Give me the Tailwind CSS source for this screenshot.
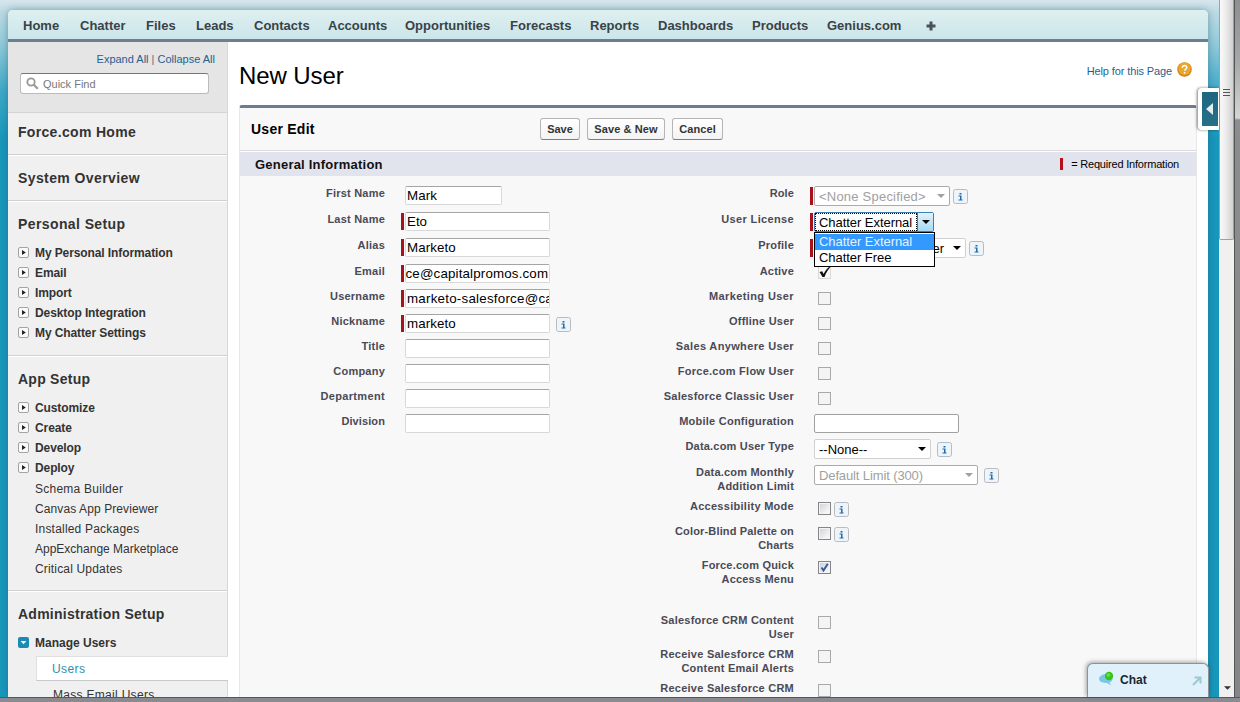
<!DOCTYPE html>
<html lang="en">
<head>
<meta charset="utf-8">
<title>New User</title>
<script src="https://cdn.jsdelivr.net/npm/@tailwindcss/browser@4"></script>
</head>
<body class="w-[1240px] h-[702px] overflow-hidden font-['Liberation_Sans',Arial,sans-serif] text-black">
<svg class="hidden">
  <symbol id="tri" viewBox="0 0 8 4"><path d="M0 0h8L4 4z" fill="currentColor"/></symbol>
  <symbol id="exp" viewBox="0 0 11 11"><rect x=".5" y=".5" width="10" height="10" rx="1.5" fill="#fafafa" stroke="#a3a3a3"/><path d="M4 3v5l3.800-2.500z" fill="#222"/></symbol>
  <symbol id="info" viewBox="0 0 15 15"><rect x=".5" y=".5" width="14" height="14" rx="2" fill="#edf5fb" stroke="#b8bbc0"/><path d="M6.500 4h2v1.500h-2zM5.500 6.500h3v4h1v1h-4v-1H7v-3H5.500z" fill="#2468a8"/></symbol>
</svg>
<div class="relative flex flex-col w-[1240px] h-[702px]">
 <div class="flex h-[697px] overflow-hidden">
  <div class="w-[1219px] h-[697px] pl-2 pt-2.5 overflow-hidden bg-[linear-gradient(180deg,#d6e6ec_0px,#bcdae4_12px,#8fc9da_45px,#3fa9c7_90px,#1797bc_140px,#1797bc_100%)]">
   <div class="w-[1200px] h-[687px] rounded-t-[5px] shadow-[0_0_7px_rgba(30,80,100,0.45)] bg-white overflow-hidden">
    <nav class="flex items-center gap-5 h-[32px] pl-[15px] pt-[2px] border-b-[3px] border-[#6f7e8f] bg-[linear-gradient(180deg,#dfeff0,#cbe6ea)] text-[13px] font-bold text-[#3a4247] whitespace-nowrap">
     <span class="w-[37px]">Home</span><span class="w-[46px]">Chatter</span><span class="w-[30px]">Files</span><span class="w-[38px]">Leads</span><span class="w-[54px]">Contacts</span><span class="w-[57px]">Accounts</span><span class="w-[85px]">Opportunities</span><span class="w-[60px]">Forecasts</span><span class="w-[48px]">Reports</span><span class="w-[74px]">Dashboards</span><span class="w-[55px]">Products</span><span class="w-[75px]">Genius.com</span>
     <svg class="w-[10px] h-[10px] ml-[4px]" viewBox="0 0 10 10"><path d="M3.500.5h3v3h3v3h-3v3h-3v-3h-3v-3h3z" fill="#4a5257"/></svg>
    </nav>
    <div class="flex h-[655px]">
     <aside class="w-[220px] shrink-0 bg-[#f0f0f0] border-r border-[#d8d8d8] text-[#333]">
      <div class="h-[71px] bg-[#e5e5e5] border-b border-[#d4d4d4] pt-[10px] pl-3">
       <div class="text-[11px] leading-[14px] text-[#1f5f92] text-right pr-[12px]">Expand All <span class="text-[#667]">|</span> Collapse All</div>
       <div class="flex items-center mt-[7px] w-[189px] h-[21px] rounded-[3px] border border-[#bbb] border-t-[#777] bg-white pl-[5px] gap-[4px] text-[11px] text-[#777]">
        <svg class="w-[13px] h-[13px]" viewBox="0 0 13 13" fill="none" stroke="#999" stroke-width="1.8"><circle cx="5" cy="5" r="3.7"/><path d="M7.8 7.800l4 4" stroke-width="2.2"/></svg><span class="pt-[2px]">Quick Find</span></div>
      </div>
      <section class="h-[42px] border-b border-[#d0d0d0] pt-[9px] pl-[10px]"><h2 class="text-[14px] leading-5 font-bold tracking-[0.32px]">Force.com Home</h2></section>
      <section class="h-[46px] border-t border-t-white border-b border-b-[#d0d0d0] pt-[12px] pl-[10px]"><h2 class="text-[14px] leading-5 font-bold tracking-[0.4px]">System Overview</h2></section>
      <section class="h-[155px] border-t border-t-white border-b border-b-[#d0d0d0] pt-[12px] pl-[10px]"><h2 class="text-[14px] leading-5 font-bold tracking-[0.4px]">Personal Setup</h2>
       <ul class="mt-[9px] text-[12px] leading-5 font-bold tracking-[-0.1px]">
        <li class="flex items-center gap-[6px]"><svg class="w-[11px] h-[11px] mb-px"><use href="#exp"/></svg>My Personal Information</li>
        <li class="flex items-center gap-[6px]"><svg class="w-[11px] h-[11px] mb-px"><use href="#exp"/></svg>Email</li>
        <li class="flex items-center gap-[6px]"><svg class="w-[11px] h-[11px] mb-px"><use href="#exp"/></svg>Import</li>
        <li class="flex items-center gap-[6px]"><svg class="w-[11px] h-[11px] mb-px"><use href="#exp"/></svg>Desktop Integration</li>
        <li class="flex items-center gap-[6px]"><svg class="w-[11px] h-[11px] mb-px"><use href="#exp"/></svg>My Chatter Settings</li>
       </ul></section>
      <section class="h-[235px] border-t border-t-white border-b border-b-[#d0d0d0] pt-[12px] pl-[10px]"><h2 class="text-[14px] leading-5 font-bold tracking-[0.25px]">App Setup</h2>
       <ul class="mt-[9px] text-[12px] leading-5 font-bold tracking-[-0.1px]">
        <li class="flex items-center gap-[6px]"><svg class="w-[11px] h-[11px] mb-px"><use href="#exp"/></svg>Customize</li>
        <li class="flex items-center gap-[6px]"><svg class="w-[11px] h-[11px] mb-px"><use href="#exp"/></svg>Create</li>
        <li class="flex items-center gap-[6px]"><svg class="w-[11px] h-[11px] mb-px"><use href="#exp"/></svg>Develop</li>
        <li class="flex items-center gap-[6px]"><svg class="w-[11px] h-[11px] mb-px"><use href="#exp"/></svg>Deploy</li>
       </ul>
       <ul class="mt-px pl-[17px] text-[12px] leading-5">
        <li class="tracking-[0.25px]">Schema Builder</li><li class="tracking-[0.1px]">Canvas App Previewer</li><li class="tracking-[0.2px]">Installed Packages</li><li>AppExchange Marketplace</li><li class="tracking-[0.17px]">Critical Updates</li>
       </ul></section>
      <section class="border-t border-t-white pt-[12px] pl-[10px]"><h2 class="text-[14px] leading-5 font-bold tracking-[0.25px]">Administration Setup</h2>
       <div class="mt-[9px] flex items-center gap-[6px] text-[12px] leading-5 font-bold"><svg class="w-[11px] h-[11px] mb-px" viewBox="0 0 11 11"><rect width="11" height="11" rx="2" fill="#1a8cb4"/><path d="M2.700 4h5.600L5.500 7.300z" fill="#fff"/></svg>Manage Users</div>
       <div class="mt-[3px] ml-[18px] mr-[-1px] h-[25px] bg-white border border-r-0 border-[#e0e0e0] border-b-[#c8c8c8] pl-[15px] text-[12px] leading-[25px] text-[#2a8fb5] tracking-[0.4px]">Users</div>
       <div class="pl-[35px] text-[12px] leading-5 mt-[4px] whitespace-nowrap tracking-[0.3px]">Mass Email Users</div>
      </section>
     </aside>
     <main class="flex-1 pl-[11px] pr-[11px]">
      <div class="flex justify-between h-[63px]">
       <h1 class="text-[24px] leading-[28px] pt-[20px] tracking-[-0.1px]">New User</h1>
       <div class="flex items-center h-[24px] mt-[16px] mr-[5px] gap-[5px] text-[11px] text-[#1f5f92]"><span class="pt-[2px] tracking-[-0.12px]">Help for this Page</span>
        <svg class="w-[15px] h-[15px] mb-px" viewBox="0 0 15 15"><circle cx="7.500" cy="7.500" r="7.300" fill="#d18a1a"/><circle cx="7.500" cy="6.800" r="6.200" fill="#eba62c"/><path d="M5.300 5.700c.1-3 4.600-2.600 4.400 0-.1 1.500-2.100 1.600-2.100 3.100" fill="none" stroke="#fff" stroke-width="1.500"/><path d="M6.800 10h1.600v1.600H6.800z" fill="#fff"/></svg></div>
      </div>
      <div class="h-[600px] w-[958px] rounded-t-[3px] border-t-[3px] border-t-[#6f7b88] border-x border-x-[#e8e8e8] bg-[#f8f8f8]">
       <div class="flex items-center h-[43px] border-b border-[#dadade] pl-[11px] text-[11px] font-bold text-[#333]">
        <h2 class="w-[289px] text-[14px] text-black tracking-[0.25px]">User Edit</h2>
        <div class="flex gap-[7px]">
         <button class="w-[40px] h-[22px] rounded-[3px] border border-[#b5b5b5] border-b-[#7f7f7f] bg-linear-to-b from-white to-[#f3f3f3]">Save</button>
         <button class="w-[78px] h-[22px] rounded-[3px] border border-[#b5b5b5] border-b-[#7f7f7f] bg-linear-to-b from-white to-[#f3f3f3] tracking-[0.1px]">Save &amp; New</button>
         <button class="w-[51px] h-[22px] rounded-[3px] border border-[#b5b5b5] border-b-[#7f7f7f] bg-linear-to-b from-white to-[#f3f3f3] tracking-[0.1px]">Cancel</button>
        </div>
       </div>
       <div class="flex items-center justify-between h-[25px] border-t border-white bg-[#e2e4ed] pl-[15px] pr-[17px]">
        <h3 class="pt-[2px] text-[13px] font-bold tracking-[0.22px] text-[#111]">General Information</h3>
        <div class="flex items-center text-[11px] gap-[8px]"><i class="w-[3px] h-[12px] mb-px bg-[#b41218]"></i><span class="tracking-[-0.2px]">= Required Information</span></div>
       </div>
       <div class="flex pt-[10px] text-[11px] leading-[14px] text-[#4a4a56]">
        <div class="w-[400px]">
         <div class="flex h-[26px]"><b class="w-[145px] text-right tracking-[0.22px]">First Name</b><i class="ml-[17px] w-[3px] h-[19px]"></i><div class="w-[97px] h-[19px] bg-white border border-[#d8d8d8] border-t-[#a5a5a5] rounded-[2px] pl-px text-[13.330px] leading-[18px] text-black overflow-hidden tracking-[0.1px]">Mark</div></div>
         <div class="flex h-[26px]"><b class="w-[145px] text-right tracking-[0.22px]">Last Name</b><i class="ml-[16px] mr-px mt-px w-[3px] h-[17px] bg-[#a8121a]"></i><div class="w-[145px] h-[19px] bg-white border border-[#d8d8d8] border-t-[#a5a5a5] rounded-[2px] pl-px text-[13.330px] leading-[18px] text-black overflow-hidden">Eto</div></div>
         <div class="flex h-[26px]"><b class="w-[145px] text-right tracking-[0.22px]">Alias</b><i class="ml-[16px] mr-px mt-px w-[3px] h-[17px] bg-[#a8121a]"></i><div class="w-[145px] h-[19px] bg-white border border-[#d8d8d8] border-t-[#a5a5a5] rounded-[2px] pl-px text-[13.330px] leading-[18px] text-black overflow-hidden tracking-[0.1px]">Marketo</div></div>
         <div class="flex h-[25px]"><b class="w-[145px] text-right tracking-[0.22px]">Email</b><i class="ml-[16px] mr-px mt-px w-[3px] h-[17px] bg-[#a8121a]"></i><div class="w-[145px] h-[19px] bg-white border border-[#d8d8d8] border-t-[#a5a5a5] rounded-[2px] text-[13.330px] leading-[18px] text-black overflow-hidden tracking-[0.16px] indent-[-0.5px]">ce@capitalpromos.com</div></div>
         <div class="flex h-[25px]"><b class="w-[145px] text-right tracking-[0.22px]">Username</b><i class="ml-[16px] mr-px mt-px w-[3px] h-[17px] bg-[#a8121a]"></i><div class="w-[145px] h-[19px] bg-white border border-[#d8d8d8] border-t-[#a5a5a5] rounded-[2px] pl-px text-[13.330px] leading-[18px] text-black overflow-hidden whitespace-nowrap tracking-[0.24px]">marketo-salesforce@ca</div></div>
         <div class="flex h-[25px]"><b class="w-[145px] text-right tracking-[0.22px]">Nickname</b><i class="ml-[16px] mr-px mt-px w-[3px] h-[17px] bg-[#a8121a]"></i><div class="w-[145px] h-[19px] bg-white border border-[#d8d8d8] border-t-[#a5a5a5] rounded-[2px] pl-px text-[13.330px] leading-[18px] text-black overflow-hidden tracking-[0.1px]">marketo</div><svg class="ml-[6px] mt-[3px] w-[15px] h-[15px]"><use href="#info"/></svg></div>
         <div class="flex h-[25px]"><b class="w-[145px] text-right tracking-[0.22px]">Title</b><div class="ml-[20px] w-[145px] h-[19px] bg-white border border-[#d8d8d8] border-t-[#a5a5a5] rounded-[2px]"></div></div>
         <div class="flex h-[25px]"><b class="w-[145px] text-right tracking-[0.22px]">Company</b><div class="ml-[20px] w-[145px] h-[19px] bg-white border border-[#d8d8d8] border-t-[#a5a5a5] rounded-[2px]"></div></div>
         <div class="flex h-[25px]"><b class="w-[145px] text-right tracking-[0.35px]">Department</b><div class="ml-[20px] w-[145px] h-[19px] bg-white border border-[#d8d8d8] border-t-[#a5a5a5] rounded-[2px]"></div></div>
         <div class="flex h-[25px]"><b class="w-[145px] text-right tracking-[0.1px]">Division</b><div class="ml-[20px] w-[145px] h-[19px] bg-white border border-[#d8d8d8] border-t-[#a5a5a5] rounded-[2px]"></div></div>
        </div>
        <div class="w-[540px]">
         <div class="flex h-[26px]"><b class="w-[154px] text-right tracking-[0.1px]">Role</b><i class="ml-[16px] mt-px w-[3px] h-[18px] bg-[#a8121a]"></i>
          <div class="ml-px flex items-center justify-between w-[136px] h-[20px] bg-white border border-[#ababab] rounded-[2px] pl-[4px] pr-[4px] text-[13px] text-[#a0a0a0] tracking-[0.22px]"><span class="pt-px">&lt;None Specified&gt;</span><svg class="w-[8px] h-[4px]"><use href="#tri"/></svg></div><svg class="ml-[3px] mt-[3px] w-[15px] h-[15px]"><use href="#info"/></svg></div>
         <div class="flex h-[26px]"><b class="w-[154px] text-right tracking-[0.35px]">User License</b><i class="ml-[16px] mt-px w-[3px] h-[18px] bg-[#a8121a]"></i>
          <div class="relative ml-px flex w-[120px] h-[20px] bg-white border border-[#3c7fb1] rounded-[2px] text-[13px] leading-[18px] text-black whitespace-nowrap"><span class="w-[102px] pl-[3px] border border-dotted border-black leading-[17px] tracking-[-0.05px]">Chatter External</span><span class="flex-1 flex items-center justify-center border-l border-[#3c7fb1] bg-linear-to-b from-[#e2f3fc] to-[#a5d8f3]"><svg class="w-[8px] h-[4px]"><use href="#tri"/></svg></span>
           <div class="absolute z-10 left-[-1px] top-[19px] w-[121px] h-[35px] bg-white border border-black leading-4 pt-px tracking-[-0.05px]"><div class="pl-[4px] bg-[#3399ff] text-[#e4f2ff]">Chatter External</div><div class="pl-[4px]">Chatter Free</div></div>
          </div></div>
         <div class="flex h-[26px]"><b class="w-[154px] text-right tracking-[0.22px]">Profile</b><i class="ml-[16px] mt-px w-[3px] h-[18px] bg-[#a8121a]"></i>
          <div class="ml-px flex items-center justify-end gap-[9px] w-[152px] h-[20px] bg-white border border-[#d0d0d0] rounded-[2px] pr-[4px] text-[13px] text-black"><span class="pt-px">er</span><svg class="w-[8px] h-[4px]"><use href="#tri"/></svg></div><svg class="ml-[3px] mt-[3px] w-[15px] h-[15px]"><use href="#info"/></svg></div>
         <div class="flex h-[25px]"><b class="w-[154px] text-right tracking-[0.22px]">Active</b><svg class="ml-[24px] w-[15px] h-[15px]" viewBox="0 0 15 15"><rect x=".5" y="1.500" width="12" height="13" fill="none" stroke="#bbb" stroke-dasharray="1 1"/><path d="M1.500 8l2.700-.700 1.400 2.700C7.500 6 10 3 14.500.5 10.500 5 8 8.500 6.500 13H4.500z" fill="#111"/></svg></div>
         <div class="flex h-[25px]"><b class="w-[154px] text-right tracking-[0.4px]">Marketing User</b><i class="ml-[24px] mt-[3px] w-[13px] h-[13px] bg-[#f4f4f4] border border-[#a9a9a9]"></i></div>
         <div class="flex h-[25px]"><b class="w-[154px] text-right tracking-[0.22px]">Offline User</b><i class="ml-[24px] mt-[3px] w-[13px] h-[13px] bg-[#f4f4f4] border border-[#a9a9a9]"></i></div>
         <div class="flex h-[25px]"><b class="w-[154px] text-right tracking-[0.35px]">Sales Anywhere User</b><i class="ml-[24px] mt-[3px] w-[13px] h-[13px] bg-[#f4f4f4] border border-[#a9a9a9]"></i></div>
         <div class="flex h-[25px]"><b class="w-[154px] text-right tracking-[0.26px]">Force.com Flow User</b><i class="ml-[24px] mt-[3px] w-[13px] h-[13px] bg-[#f4f4f4] border border-[#a9a9a9]"></i></div>
         <div class="flex h-[25px]"><b class="w-[154px] text-right tracking-[0.24px]">Salesforce Classic User</b><i class="ml-[24px] mt-[3px] w-[13px] h-[13px] bg-[#f4f4f4] border border-[#a9a9a9]"></i></div>
         <div class="flex h-[25px]"><b class="w-[154px] text-right tracking-[0.24px]">Mobile Configuration</b><div class="ml-[20px] w-[145px] h-[19px] bg-white border border-[#a0a0a0] rounded-[2px]"></div></div>
         <div class="flex h-[26px]"><b class="w-[154px] text-right tracking-[0.2px]">Data.com User Type</b><div class="ml-[20px] flex items-center justify-between w-[117px] h-[20px] bg-white border border-[#d0d0d0] rounded-[2px] px-[4px] text-[13px] text-black"><span class="pt-px">--None--</span><svg class="w-[8px] h-[4px]"><use href="#tri"/></svg></div><svg class="ml-[6px] mt-[3px] w-[15px] h-[15px]"><use href="#info"/></svg></div>
         <div class="flex h-[34px]"><b class="w-[154px] text-right tracking-[0.2px]">Data.com Monthly<br>Addition Limit</b><div class="ml-[20px] flex items-center justify-between w-[164px] h-[20px] bg-white border border-[#ababab] rounded-[2px] px-[4px] text-[13px] text-[#a0a0a0] tracking-[-0.12px]"><span class="pt-px">Default Limit (300)</span><svg class="w-[8px] h-[4px]"><use href="#tri"/></svg></div><svg class="ml-[6px] mt-[3px] w-[15px] h-[15px]"><use href="#info"/></svg></div>
         <div class="flex h-[25px]"><b class="w-[154px] text-right tracking-[0.28px]">Accessibility Mode</b><i class="ml-[24px] mt-[3px] w-[13px] h-[13px] bg-linear-to-br from-[#cfd1d5] to-white border border-[#858585] shadow-[inset_0_0_0_1px_#f4f4f4]"></i><svg class="ml-[3px] mt-[3px] w-[15px] h-[15px]"><use href="#info"/></svg></div>
         <div class="flex h-[34px]"><b class="w-[154px] text-right tracking-[0.16px]">Color-Blind Palette on<br>Charts</b><i class="ml-[24px] mt-[3px] w-[13px] h-[13px] bg-linear-to-br from-[#cfd1d5] to-white border border-[#858585] shadow-[inset_0_0_0_1px_#f4f4f4]"></i><svg class="ml-[3px] mt-[3px] w-[15px] h-[15px]"><use href="#info"/></svg></div>
         <div class="flex h-[55px]"><b class="w-[154px] text-right tracking-[0.2px]">Force.com Quick<br>Access Menu</b><i class="ml-[24px] mt-[3px] w-[13px] h-[13px] bg-linear-to-br from-[#c3cde0] to-white border border-[#858585] shadow-[inset_0_0_0_1px_#f4f4f4]"><svg class="w-[11px] h-[11px]" viewBox="0 0 11 11"><path d="M2.500 5.500l2 3L8.800 1.800" fill="none" stroke="#3b5595" stroke-width="1.900"/></svg></i></div>
         <div class="flex h-[34px]"><b class="w-[154px] text-right tracking-[0.22px]">Salesforce CRM Content<br>User</b><i class="ml-[24px] mt-[3px] w-[13px] h-[13px] bg-[#f4f4f4] border border-[#a9a9a9]"></i></div>
         <div class="flex h-[34px]"><b class="w-[154px] text-right tracking-[0.24px]">Receive Salesforce CRM<br>Content Email Alerts</b><i class="ml-[24px] mt-[3px] w-[13px] h-[13px] bg-[#f4f4f4] border border-[#a9a9a9]"></i></div>
         <div class="flex h-[34px]"><b class="w-[154px] text-right tracking-[0.24px]">Receive Salesforce CRM</b><i class="ml-[24px] mt-[3px] w-[13px] h-[13px] bg-[#f4f4f4] border border-[#a9a9a9]"></i></div>
        </div>
       </div>
      </div>
     </main>
    </div>
   </div>
  </div>
  <div class="flex flex-col w-[15px] h-[697px] bg-[#f0f0f1]">
   <div class="h-[240px] border border-t-0 border-[#a0a0a0] rounded-b-[2px] bg-[linear-gradient(90deg,#fafafa,#ececec_45%,#d0d0d2)] pt-[89px] pl-[3px]"><svg class="w-[7px] h-[8px]" viewBox="0 0 7 8"><path d="M0 .5h7M0 3.500h7M0 6.500h7" stroke="#555"/></svg></div>
   <svg class="mt-[446px] ml-[5px] w-[7px] h-[4px] text-[#333]"><use href="#tri"/></svg>
  </div>
  <div class="w-[6px] h-[697px] border-l border-[#555] bg-[linear-gradient(180deg,#8d8f92_0px,#a5a7a8_60px,#d4d6d4_118px,#8c8d90_120px,#85868a_100%)]"></div>
 </div>
 <div class="h-[5px] border-t border-[#55575c] bg-[#8a8b90]"></div>
 <div class="absolute left-[1198px] top-[88px] w-[21px] h-[42px] bg-white rounded-l-[4px] shadow-[-1px_0_3px_rgba(0,0,0,0.5)] pl-[4px] pt-[4px]"><div class="flex items-center w-[16px] h-[34px] pl-[4px] bg-linear-to-b from-[#1f6680] to-[#247088]"><svg class="w-[7px] h-[12px]" viewBox="0 0 7 12"><path d="M7 0v12L0 6z" fill="#e4eef0"/></svg></div></div>
 <div class="absolute left-[1087px] top-[663px] flex items-center w-[122px] h-[34px] bg-[#e1f1fb] border border-b-0 border-[#8a9398] rounded-t-[6px] shadow-[-1px_-1px_4px_rgba(0,0,0,0.35)] pl-[10px] pr-[6px]">
  <svg class="w-[16px] h-[16px] mb-[3px]" viewBox="0 0 16 16"><path d="M7 3c8-1 10 7 4.500 8.500l1.500 3-4-2.500C-1 12.500-1.500 4.500 7 3z" fill="#7cc6e4"/><circle cx="11" cy="5" r="4.200" fill="#38c41f"/><circle cx="10.300" cy="4" r="1.800" fill="#6fdc4c"/></svg>
  <span class="ml-[6px] mb-[2px] text-[12px] font-bold text-[#1a2530] flex-1">Chat</span>
  <svg class="w-[10px] h-[10px]" viewBox="0 0 10 10"><path d="M1 9l7-7M2.500 1.500h6v6" fill="none" stroke="#9ac9d3" stroke-width="2"/></svg>
 </div>
</div>
</body>
</html>
